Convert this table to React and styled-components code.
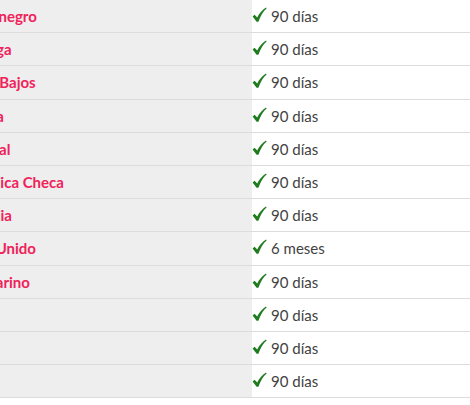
import React from "react";
import styled, { createGlobalStyle } from "styled-components";

const Global = createGlobalStyle`
  html, body { margin: 0; padding: 0; background: #ffffff; }
  body { font-family: Lato, "Open Sans", sans-serif; overflow: hidden; }
`;

const Viewport = styled.div`
  width: 470px;
  height: 405px;
  overflow: hidden;
`;

const Table = styled.div`
  display: grid;
  margin-left: -52px;
  width: 600px;
`;

const Row = styled.div`
  display: grid;
  grid-template-columns: 304px 1fr;
  height: 33.2px;
  box-sizing: border-box;
  border-bottom: 1px solid #dcdcdc;
`;

const Country = styled.div`
  background: #eeeeee;
  display: flex;
  align-items: center;
  padding-left: 6px;
  font-size: 15px;
  font-weight: 700;
  color: #f0225a;
  white-space: nowrap;
`;

const Stay = styled.div`
  display: flex;
  align-items: center;
  gap: 4px;
  padding-left: 0;
  font-size: 15px;
  color: #424242;
`;

const Check = styled.svg`
  width: 15px;
  height: 16px;
  flex: none;
  margin-top: -2px;
`;

const CheckIcon = () => (
  <Check viewBox="0 0 15 16" aria-hidden="true">
    <path
      d="M0.6 9.4 L2.6 7.8 L5.2 10.6 C7.2 6.6 10.2 3.2 14 0.6 L14.6 1.6 C11.4 4.4 8.6 8.6 6.4 14.8 L4.6 14.8 Z"
      fill="#1e7b1e"
    />
  </Check>
);

const rows = [
  ["Montenegro", "90 días"],
  ["Noruega", "90 días"],
  ["Países Bajos", "90 días"],
  ["Polonia", "90 días"],
  ["Portugal", "90 días"],
  ["República Checa", "90 días"],
  ["Rumania", "90 días"],
  ["Reino Unido", "6 meses"],
  ["San Marino", "90 días"],
  ["", "90 días"],
  ["", "90 días"],
  ["", "90 días"],
];

export default function App() {
  return (
    <Viewport>
      <Global />
      <Table>
        {rows.map(([name, stay], i) => (
          <Row key={i}>
            <Country>{name}</Country>
            <Stay>
              <CheckIcon />
              {stay}
            </Stay>
          </Row>
        ))}
      </Table>
    </Viewport>
  );
}
